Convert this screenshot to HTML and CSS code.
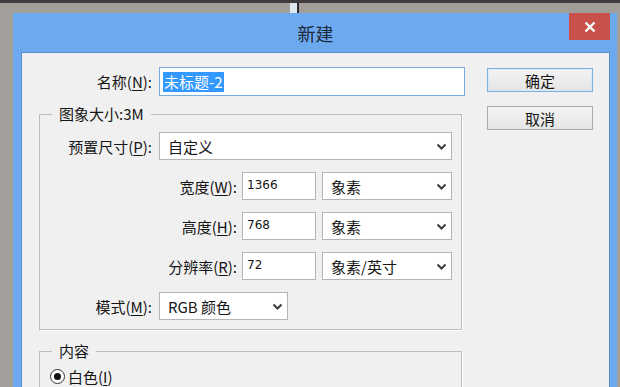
FILE: index.html
```html
<!DOCTYPE html>
<html>
  <head>
    <meta charset="utf-8">
    <title>新建</title>
    <link rel="stylesheet" href="styles.css">
  </head>
  <body>
    <div class="window">
      <div class="titlebar">
        <div class="title">新建</div>
        <div class="close">
          <svg width="12" height="12" viewBox="0 0 12 12">
            <path d="M1.5 1.5 L10.5 10.5 M10.5 1.5 L1.5 10.5" stroke="#fff" stroke-width="2.4" fill="none"/>
          </svg>
        </div>
      </div>

      <div class="client">
        <div class="form">
          <div class="name-row">
            <div class="label">名称(<u>N</u>):</div>
            <div class="name-input"><span class="selected">未标题-2</span></div>
          </div>

          <fieldset class="group">
            <legend>图象大小:3M</legend>
            <div class="group-body">
              <div class="row">
                <div class="label">预置尺寸(<u>P</u>):</div>
                <div class="box select w-full">
                  <span>自定义</span>
                  <svg class="chev" width="11" height="7" viewBox="0 0 11 7"><polyline points="1.5,1.5 5.5,5.5 9.5,1.5"/></svg>
                </div>
              </div>
              <div class="row size">
                <div class="label">宽度(<u>W</u>):</div>
                <div class="box num">1366</div>
                <div class="box select w-unit">
                  <span>象素</span>
                  <svg class="chev" width="11" height="7" viewBox="0 0 11 7"><polyline points="1.5,1.5 5.5,5.5 9.5,1.5"/></svg>
                </div>
              </div>
              <div class="row size">
                <div class="label">高度(<u>H</u>):</div>
                <div class="box num">768</div>
                <div class="box select w-unit">
                  <span>象素</span>
                  <svg class="chev" width="11" height="7" viewBox="0 0 11 7"><polyline points="1.5,1.5 5.5,5.5 9.5,1.5"/></svg>
                </div>
              </div>
              <div class="row size">
                <div class="label">分辨率(<u>R</u>):</div>
                <div class="box num">72</div>
                <div class="box select w-unit">
                  <span>象素/英寸</span>
                  <svg class="chev" width="11" height="7" viewBox="0 0 11 7"><polyline points="1.5,1.5 5.5,5.5 9.5,1.5"/></svg>
                </div>
              </div>
              <div class="row">
                <div class="label">模式(<u>M</u>):</div>
                <div class="box select w-mode">
                  <span>RGB 颜色</span>
                  <svg class="chev" width="11" height="7" viewBox="0 0 11 7"><polyline points="1.5,1.5 5.5,5.5 9.5,1.5"/></svg>
                </div>
              </div>
            </div>
          </fieldset>

          <fieldset class="group content">
            <legend>内容</legend>
            <div class="radio-list">
              <div class="radio-row">
                <span class="radio checked"></span>
                <span>白色(<u>I</u>)</span>
              </div>
            </div>
          </fieldset>
        </div>

        <div class="buttons">
          <div class="btn default">确定</div>
          <div class="btn">取消</div>
        </div>
      </div>
    </div>
  </body>
</html>
```

FILE: styles.css
```css
html,
body {
  margin: 0;
  height: 100%;
  overflow: hidden;
}

body {
  box-sizing: border-box;
  padding: 13px 3px 0 13px;
  font-family: "Noto Sans CJK SC", sans-serif;
  font-size: 15px;
  color: #151515;
  background:
    linear-gradient(#403b3f, #403b3f) top left / 100% 3px no-repeat,
    linear-gradient(to right, transparent 290px, #dde8f0 290px, #dde8f0 297px, #2c2c30 297px, #2c2c30 299px, transparent 299px) top left / 100% 13px no-repeat,
    #a29e9a;
}

u {
  text-decoration-thickness: 1px;
  text-underline-offset: 2px;
}

.window {
  background-color: #6ca9ef;
  padding: 0 7px 0 8px;
  height: 420px;
}

.titlebar {
  height: 39px;
  display: grid;
  grid-template-columns: 1fr auto 1fr;
  align-items: start;
}
.title {
  grid-column: 2;
  font-size: 18px;
  line-height: 40px;
  color: #1d2a3a;
}
.close {
  grid-column: 3;
  justify-self: end;
  width: 41px;
  height: 27px;
  background-color: #c9514b;
  display: flex;
  align-items: center;
  justify-content: center;
}

.client {
  background-color: #f0f0f0;
  border: 1px solid #5a8dcb;
  border-bottom: 0;
  padding: 14px 16px 0 17px;
  height: 380px;
  display: flex;
  gap: 22px;
}

.form {
  width: 426px;
}

.name-row {
  display: flex;
  align-items: center;
  gap: 7px;
  height: 29px;
}
.label {
  text-align: right;
  white-space: nowrap;
}
.name-row .label {
  width: 113px;
}
.name-input {
  width: 306px;
  height: 29px;
  box-sizing: border-box;
  border: 1px solid #7aabdc;
  background-color: white;
  padding-left: 3px;
  display: flex;
  align-items: center;
}
.selected {
  background-color: #3399ff;
  color: white;
  line-height: 20px;
  padding: 0 1px;
}

.group {
  margin: 8px 3px 0 0;
  padding: 0 0 9px 0;
  border: 1px solid #bdbdbd;
  box-shadow: 1px 1px 0 white;
  min-width: 0;
}
.group legend {
  margin-left: 12px;
  padding: 0 7px;
  line-height: 20px;
}
.group-body {
  padding-top: 8px;
  display: flex;
  flex-direction: column;
  gap: 12px;
}

.row {
  display: flex;
  align-items: center;
  height: 28px;
}
.row .label {
  width: 112px;
  margin-right: 7px;
}
.row.size .label {
  width: 197px;
  margin-right: 5px;
}

.box {
  height: 28px;
  box-sizing: border-box;
  border: 1px solid #b5b5b5;
  background-color: white;
  display: flex;
  align-items: center;
}
.num {
  width: 74px;
  margin-right: 6px;
  padding: 0 0 2px 4px;
  font-family: "DejaVu Sans", sans-serif;
  font-size: 12px;
}
.select {
  justify-content: space-between;
  padding: 0 4px 0 8px;
}
.chev polyline {
  fill: none;
  stroke: #3c3c3c;
  stroke-width: 2;
}
.w-full {
  width: 293px;
}
.w-unit {
  width: 130px;
}
.w-mode {
  width: 129px;
}

.group.content {
  margin-top: 11px;
}
.radio-list {
  padding: 5px 0 0 10px;
}
.radio-row {
  display: flex;
  align-items: center;
  gap: 3px;
  height: 20px;
}
.radio {
  width: 15px;
  height: 15px;
  box-sizing: border-box;
  border: 1px solid #333;
  border-radius: 50%;
  background-color: white;
  display: flex;
  align-items: center;
  justify-content: center;
}
.radio.checked::after {
  content: "";
  width: 7px;
  height: 7px;
  border-radius: 50%;
  background-color: #111;
}

.buttons {
  width: 106px;
  padding-top: 1px;
  display: flex;
  flex-direction: column;
  gap: 14px;
}
.btn {
  height: 24px;
  box-sizing: border-box;
  border: 1px solid #acacac;
  background: linear-gradient(#f4f4f4, #e4e4e4);
  display: flex;
  align-items: center;
  justify-content: center;
}
.btn.default {
  border-color: #7fb0dd;
  box-shadow: inset 0 0 0 1px #d7e8f7;
}
```
